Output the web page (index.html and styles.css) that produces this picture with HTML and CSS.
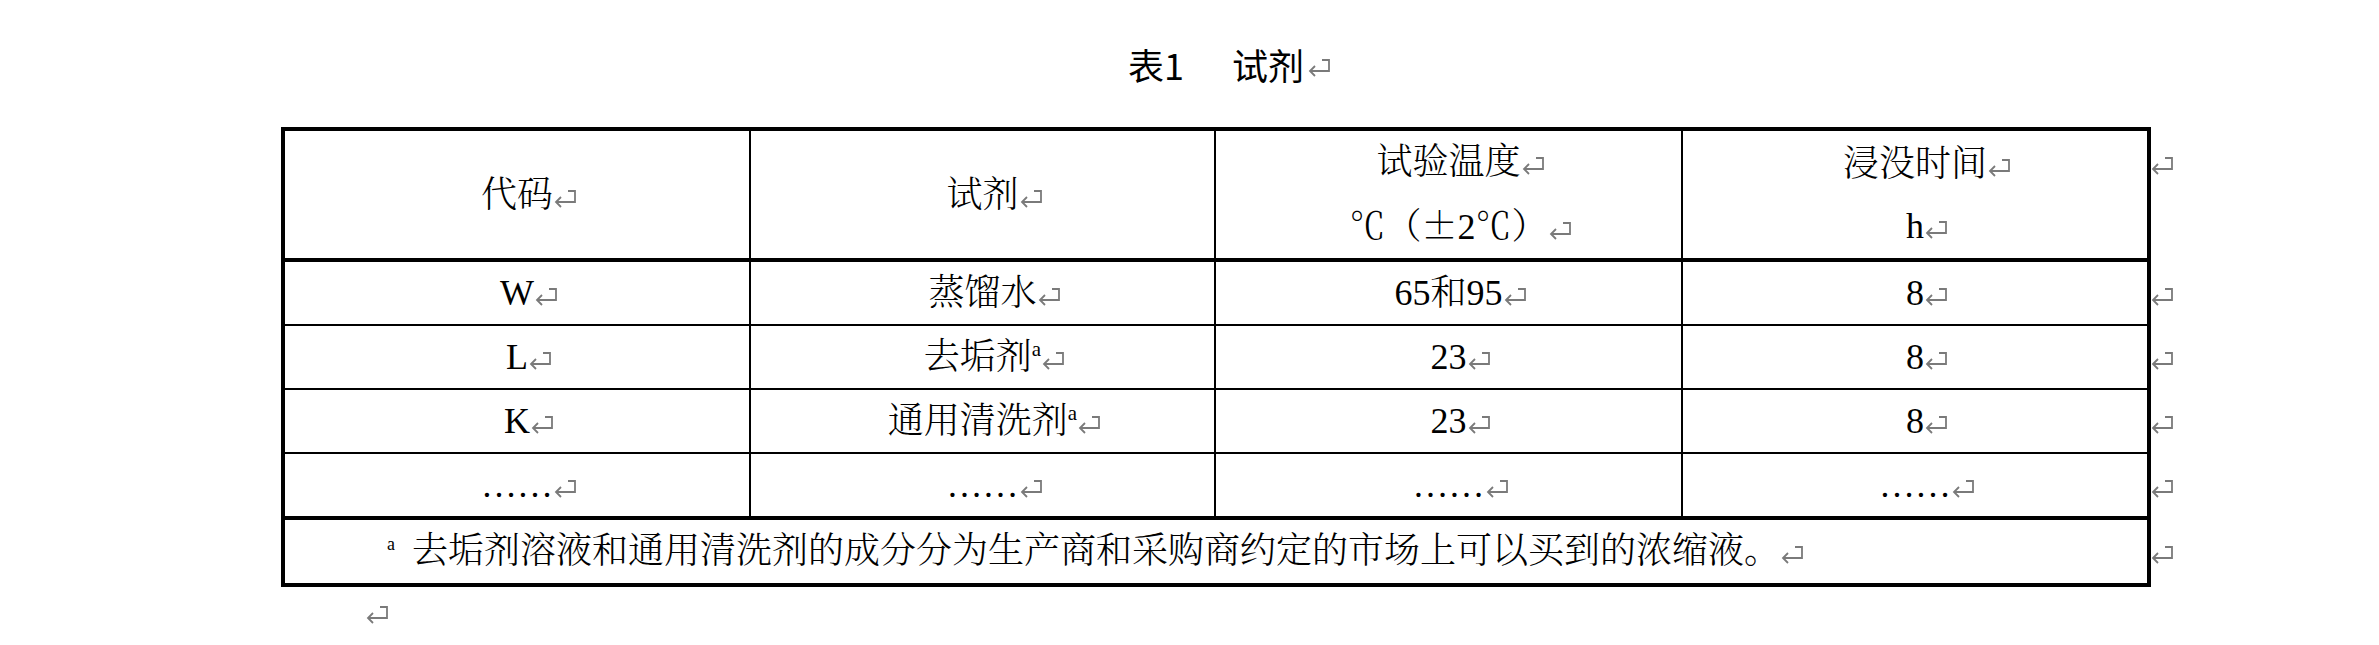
FILE: index.html
```html
<!DOCTYPE html>
<html lang="zh-CN">
<head>
<meta charset="utf-8">
<title>表1 试剂</title>
<link rel="stylesheet" href="styles.css">
</head>
<body>
<div class="page">
  <h1 class="title"><span class="t-num">表1</span><span class="t-gap"></span><span>试剂</span><svg class="pm" viewBox="0 0 22 20"><path d="M14 2H21V13H2M7 8L2 13L7 18"/></svg></h1>

  <table class="reagents">
    <colgroup>
      <col class="c1"><col class="c2"><col class="c3"><col class="c4">
    </colgroup>
    <thead>
      <tr>
        <th><div class="ln">代码<svg class="pm" viewBox="0 0 22 20"><path d="M14 2H21V13H2M7 8L2 13L7 18"/></svg></div></th>
        <th><div class="ln">试剂<svg class="pm" viewBox="0 0 22 20"><path d="M14 2H21V13H2M7 8L2 13L7 18"/></svg></div></th>
        <th><div class="ln">试验温度<svg class="pm" viewBox="0 0 22 20"><path d="M14 2H21V13H2M7 8L2 13L7 18"/></svg></div><div class="ln"><span class="fw">℃</span><span class="fw">（</span><span class="fw">±</span>2<span class="fw">℃</span><span class="fw">）</span><svg class="pm" viewBox="0 0 22 20"><path d="M14 2H21V13H2M7 8L2 13L7 18"/></svg></div></th>
        <th class="last"><div class="ln">浸没时间<svg class="pm" viewBox="0 0 22 20"><path d="M14 2H21V13H2M7 8L2 13L7 18"/></svg></div><div class="ln">h<svg class="pm" viewBox="0 0 22 20"><path d="M14 2H21V13H2M7 8L2 13L7 18"/></svg></div><span class="rowmark"><svg class="pm" viewBox="0 0 22 20"><path d="M14 2H21V13H2M7 8L2 13L7 18"/></svg></span></th>
      </tr>
    </thead>
    <tbody>
      <tr>
        <td>W<svg class="pm" viewBox="0 0 22 20"><path d="M14 2H21V13H2M7 8L2 13L7 18"/></svg></td>
        <td>蒸馏水<svg class="pm" viewBox="0 0 22 20"><path d="M14 2H21V13H2M7 8L2 13L7 18"/></svg></td>
        <td>65和95<svg class="pm" viewBox="0 0 22 20"><path d="M14 2H21V13H2M7 8L2 13L7 18"/></svg></td>
        <td class="last">8<svg class="pm" viewBox="0 0 22 20"><path d="M14 2H21V13H2M7 8L2 13L7 18"/></svg><span class="rowmark"><svg class="pm" viewBox="0 0 22 20"><path d="M14 2H21V13H2M7 8L2 13L7 18"/></svg></span></td>
      </tr>
      <tr>
        <td>L<svg class="pm" viewBox="0 0 22 20"><path d="M14 2H21V13H2M7 8L2 13L7 18"/></svg></td>
        <td>去垢剂<sup class="fn">a</sup><svg class="pm" viewBox="0 0 22 20"><path d="M14 2H21V13H2M7 8L2 13L7 18"/></svg></td>
        <td>23<svg class="pm" viewBox="0 0 22 20"><path d="M14 2H21V13H2M7 8L2 13L7 18"/></svg></td>
        <td class="last">8<svg class="pm" viewBox="0 0 22 20"><path d="M14 2H21V13H2M7 8L2 13L7 18"/></svg><span class="rowmark"><svg class="pm" viewBox="0 0 22 20"><path d="M14 2H21V13H2M7 8L2 13L7 18"/></svg></span></td>
      </tr>
      <tr>
        <td>K<svg class="pm" viewBox="0 0 22 20"><path d="M14 2H21V13H2M7 8L2 13L7 18"/></svg></td>
        <td>通用清洗剂<sup class="fn">a</sup><svg class="pm" viewBox="0 0 22 20"><path d="M14 2H21V13H2M7 8L2 13L7 18"/></svg></td>
        <td>23<svg class="pm" viewBox="0 0 22 20"><path d="M14 2H21V13H2M7 8L2 13L7 18"/></svg></td>
        <td class="last">8<svg class="pm" viewBox="0 0 22 20"><path d="M14 2H21V13H2M7 8L2 13L7 18"/></svg><span class="rowmark"><svg class="pm" viewBox="0 0 22 20"><path d="M14 2H21V13H2M7 8L2 13L7 18"/></svg></span></td>
      </tr>
      <tr>
        <td>……<svg class="pm" viewBox="0 0 22 20"><path d="M14 2H21V13H2M7 8L2 13L7 18"/></svg></td>
        <td>……<svg class="pm" viewBox="0 0 22 20"><path d="M14 2H21V13H2M7 8L2 13L7 18"/></svg></td>
        <td>……<svg class="pm" viewBox="0 0 22 20"><path d="M14 2H21V13H2M7 8L2 13L7 18"/></svg></td>
        <td class="last">……<svg class="pm" viewBox="0 0 22 20"><path d="M14 2H21V13H2M7 8L2 13L7 18"/></svg><span class="rowmark"><svg class="pm" viewBox="0 0 22 20"><path d="M14 2H21V13H2M7 8L2 13L7 18"/></svg></span></td>
      </tr>
    </tbody>
    <tfoot>
      <tr>
        <td colspan="4" class="note last"><sup class="fn note-fn">a</sup>去垢剂溶液和通用清洗剂的成分分为生产商和采购商约定的市场上可以买到的浓缩液。<svg class="pm" viewBox="0 0 22 20"><path d="M14 2H21V13H2M7 8L2 13L7 18"/></svg><span class="rowmark"><svg class="pm" viewBox="0 0 22 20"><path d="M14 2H21V13H2M7 8L2 13L7 18"/></svg></span></td>
      </tr>
    </tfoot>
  </table>

  <p class="after"><svg class="pm" viewBox="0 0 22 20"><path d="M14 2H21V13H2M7 8L2 13L7 18"/></svg></p>
</div>
</body>
</html>
```

FILE: styles.css
```css
html, body {
  margin: 0;
  padding: 0;
  background: #ffffff;
}

.page {
  padding: 44px 0 0 281px;
  width: 1870px;
}

.title {
  margin: 0;
  font-family: "Liberation Sans", "Noto Sans CJK SC", sans-serif;
  font-size: 36px;
  font-weight: 400;
  line-height: 40px;
  text-align: center;
  color: #000;
}

.title .t-num {
  font-family: "Noto Sans CJK SC", sans-serif;
}

.title .pm {
  margin-left: 4px;
  margin-right: -26px;
  vertical-align: 2px;
}

.t-gap {
  display: inline-block;
  width: 48px;
}

.pm {
  display: inline-block;
  width: 22px;
  height: 20px;
  margin-left: 1px;
  margin-right: -23px;
  vertical-align: -2px;
  fill: none;
  stroke: #7a7a7a;
  stroke-width: 1.8;
}

.reagents {
  margin-top: 39px;
  width: 1870px;
  table-layout: fixed;
  border-collapse: collapse;
  border: 4px solid #000;
  font-family: "Liberation Serif", "Noto Serif CJK SC", "Noto Sans CJK SC", serif;
  font-size: 36px;
  font-weight: 300;
  color: #000;
}

.c1 { width: 467px; }
.c2 { width: 465px; }
.c3 { width: 467px; }
.c4 { width: 467px; }

.reagents th,
.reagents td {
  border: 2px solid #000;
  padding: 0;
  text-align: center;
  vertical-align: middle;
  line-height: 62px;
  font-weight: 300;
  white-space: nowrap;
}

.reagents thead th {
  border-bottom: 4px solid #000;
  height: 125px;
}

.reagents tfoot td {
  border-top: 4px solid #000;
  line-height: 63px;
}

.ln {
  line-height: 62px;
}

.fw {
  display: inline-block;
  width: 36px;
  text-align: center;
  font-family: "Noto Serif CJK SC", "Noto Sans CJK SC", sans-serif;
}

.last {
  position: relative;
}

.rowmark {
  position: absolute;
  top: 0;
  right: -26px;
  line-height: 62px;
}

.rowmark .pm {
  margin: 0;
}

.fn {
  font-size: 21px;
  line-height: 0;
  vertical-align: 13px;
}

.note {
  text-align: left !important;
  padding-left: 102px !important;
}

.note-fn {
  font-size: 18px;
  margin-right: 17px;
}

.after {
  margin: 18px 0 0 85px;
  line-height: 24px;
  height: 24px;
}

.after .pm {
  margin: 0;
}
```
